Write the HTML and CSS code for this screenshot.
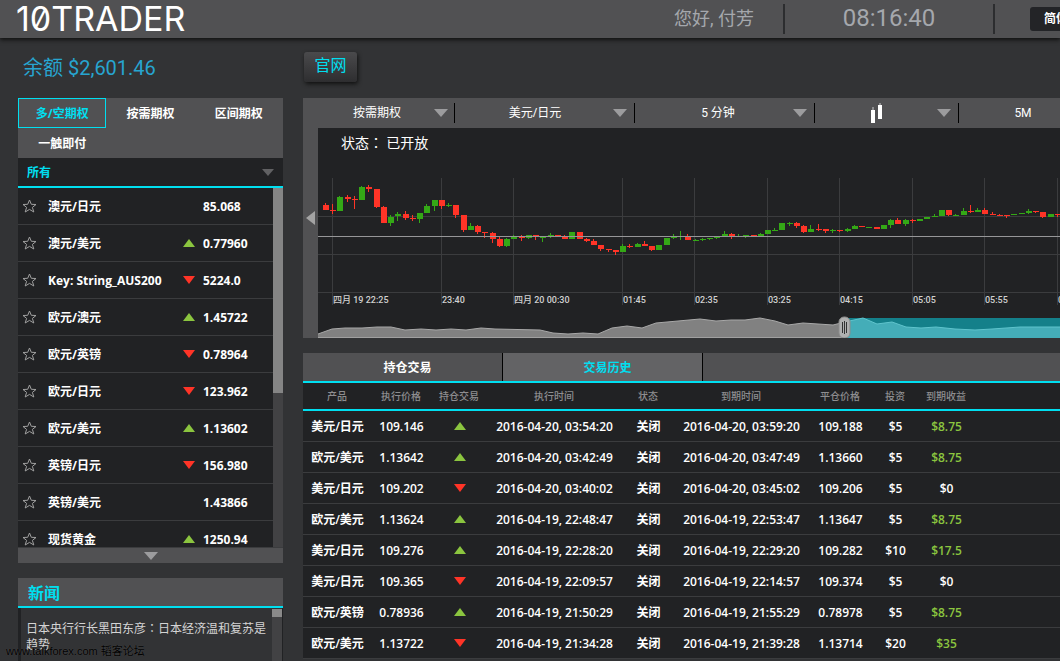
FILE: index.html
```html
<!DOCTYPE html>
<html lang="zh-CN">
<head>
<meta charset="utf-8">
<title>10TRADER</title>
<link rel="stylesheet" href="styles.css">
</head>
<body>
<svg class="defs" aria-hidden="true">
  <symbol id="star" viewBox="0 0 15 14"><path d="M7.5 1 L9.3 5.3 L14 5.5 L10.4 8.4 L11.8 13 L7.5 10.4 L3.2 13 L4.6 8.4 L1 5.5 L5.7 5.3 Z" fill="none" stroke="#a0a0a0" stroke-width="1"/></symbol>
  <symbol id="up" viewBox="0 0 12 8"><path d="M6 0 L12 8 H0 Z" fill="#8bc53f"/></symbol>
  <symbol id="down" viewBox="0 0 12 8"><path d="M0 0 H12 L6 8 Z" fill="#ff3427"/></symbol>
  <symbol id="caret" viewBox="0 0 14 8"><path d="M0 0 H14 L7 8 Z" fill="currentColor"/></symbol>
</svg>

<header class="topbar">
  <a class="logo" href="#">10TRADER</a>
  <div class="greeting">您好, 付芳</div>
  <div class="clock">08:16:40</div>
  <div class="language">
    <select class="language-select" aria-label="语言"><option>简体中文</option></select>
  </div>
</header>

<div class="layout">
  <aside class="side">
    <div class="balance">余额 $2,601.46</div>

    <section class="assets">
      <nav class="option-tabs">
        <button class="option-tab active">多/空期权</button>
        <button class="option-tab">按需期权</button>
        <button class="option-tab">区间期权</button>
        <button class="option-tab">一触即付</button>
      </nav>
      <label class="filter">
        <select class="filter-select" aria-label="资产"><option>所有</option></select>
        <svg class="filter-caret"><use href="#caret"/></svg>
      </label>
      <div class="asset-view">
        <ul class="asset-list">
          <li class="asset"><svg class="star"><use href="#star"/></svg><span class="asset-name">澳元/日元</span><span class="arrow"></span><span class="price">85.068</span></li>
          <li class="asset"><svg class="star"><use href="#star"/></svg><span class="asset-name">澳元/美元</span><svg class="arrow"><use href="#up"/></svg><span class="price">0.77960</span></li>
          <li class="asset"><svg class="star"><use href="#star"/></svg><span class="asset-name">Key: String_AUS200</span><svg class="arrow"><use href="#down"/></svg><span class="price">5224.0</span></li>
          <li class="asset"><svg class="star"><use href="#star"/></svg><span class="asset-name">欧元/澳元</span><svg class="arrow"><use href="#up"/></svg><span class="price">1.45722</span></li>
          <li class="asset"><svg class="star"><use href="#star"/></svg><span class="asset-name">欧元/英镑</span><svg class="arrow"><use href="#down"/></svg><span class="price">0.78964</span></li>
          <li class="asset"><svg class="star"><use href="#star"/></svg><span class="asset-name">欧元/日元</span><svg class="arrow"><use href="#down"/></svg><span class="price">123.962</span></li>
          <li class="asset"><svg class="star"><use href="#star"/></svg><span class="asset-name">欧元/美元</span><svg class="arrow"><use href="#up"/></svg><span class="price">1.13602</span></li>
          <li class="asset"><svg class="star"><use href="#star"/></svg><span class="asset-name">英镑/日元</span><svg class="arrow"><use href="#down"/></svg><span class="price">156.980</span></li>
          <li class="asset"><svg class="star"><use href="#star"/></svg><span class="asset-name">英镑/美元</span><span class="arrow"></span><span class="price">1.43866</span></li>
          <li class="asset"><svg class="star"><use href="#star"/></svg><span class="asset-name">现货黄金</span><svg class="arrow"><use href="#up"/></svg><span class="price">1250.94</span></li>
        </ul>
        <div class="track"><div class="thumb"></div></div>
      </div>
      <button class="more" aria-label="更多"><svg class="caret"><use href="#caret"/></svg></button>
    </section>

    <section class="news">
      <h2 class="news-title">新闻</h2>
      <div class="news-body">
        <a class="news-item" href="#">日本央行行长黑田东彦<span lang="zh-Hant">：</span>日本经济温和复苏是趋势</a>
        <div class="news-track"><div class="news-thumb"></div></div>
      </div>
    </section>
  </aside>

  <main class="main">
    <div class="actions"><button class="site-button">官网</button></div>

    <section class="chart">
      <div class="toolbar">
        <label class="tool tool-type"><select class="tool-select" aria-label="期权类型"><option>按需期权</option></select><svg class="caret"><use href="#caret"/></svg></label>
        <label class="tool"><select class="tool-select" aria-label="产品"><option>美元/日元</option></select><svg class="caret"><use href="#caret"/></svg></label>
        <label class="tool tool-period"><select class="tool-select" aria-label="周期"><option>5 分钟</option></select><svg class="caret"><use href="#caret"/></svg></label>
        <button class="tool tool-style" aria-label="图表样式">
          <span class="tool-icon"><svg width="14" height="22" viewBox="0 0 14 22"><path d="M3 5V8M10 1V4" stroke="#8c8c8e" stroke-width="2"/><rect x="1" y="8" width="4" height="13" fill="#fff"/><rect x="8" y="3" width="4" height="14" fill="#fff"/></svg></span>
          <svg class="caret"><use href="#caret"/></svg>
        </button>
        <button class="tool tool-zoom">5M</button>
      </div>
      <div class="chart-body">
        <button class="collapse" aria-label="收起"><svg width="9" height="14" viewBox="0 0 9 14"><path d="M9 0V14L0 7Z" fill="#a3a3a3"/></svg></button>
        <div class="plot">
          <div class="status">状态<span lang="zh-Hant">：</span> 已开放</div>
          <svg class="plot-svg" id="plot"></svg>
        </div>
      </div>
    </section>

    <section class="trades">
      <nav class="trade-tabs">
        <button class="trade-tab">持仓交易</button>
        <button class="trade-tab active">交易历史</button>
      </nav>
      <table class="table">
        <colgroup><col class="c-asset"><col class="c-price"><col class="c-dir"><col class="c-time"><col class="c-state"><col class="c-expiry"><col class="c-close"><col class="c-stake"><col class="c-payout"><col></colgroup>
        <thead><tr><th>产品</th><th>执行价格</th><th>持仓交易</th><th>执行时间</th><th>状态</th><th>到期时间</th><th>平仓价格</th><th>投资</th><th>到期收益</th><th></th></tr></thead>
        <tbody>
          <tr><td>美元/日元</td><td>109.146</td><td><svg class="arrow"><use href="#up"/></svg></td><td>2016-04-20, 03:54:20</td><td>关闭</td><td>2016-04-20, 03:59:20</td><td>109.188</td><td>$5</td><td class="win">$8.75</td><td></td></tr>
          <tr><td>欧元/美元</td><td>1.13642</td><td><svg class="arrow"><use href="#up"/></svg></td><td>2016-04-20, 03:42:49</td><td>关闭</td><td>2016-04-20, 03:47:49</td><td>1.13660</td><td>$5</td><td class="win">$8.75</td><td></td></tr>
          <tr><td>美元/日元</td><td>109.202</td><td><svg class="arrow"><use href="#down"/></svg></td><td>2016-04-20, 03:40:02</td><td>关闭</td><td>2016-04-20, 03:45:02</td><td>109.206</td><td>$5</td><td>$0</td><td></td></tr>
          <tr><td>欧元/美元</td><td>1.13624</td><td><svg class="arrow"><use href="#up"/></svg></td><td>2016-04-19, 22:48:47</td><td>关闭</td><td>2016-04-19, 22:53:47</td><td>1.13647</td><td>$5</td><td class="win">$8.75</td><td></td></tr>
          <tr><td>美元/日元</td><td>109.276</td><td><svg class="arrow"><use href="#up"/></svg></td><td>2016-04-19, 22:28:20</td><td>关闭</td><td>2016-04-19, 22:29:20</td><td>109.282</td><td>$10</td><td class="win">$17.5</td><td></td></tr>
          <tr><td>美元/日元</td><td>109.365</td><td><svg class="arrow"><use href="#down"/></svg></td><td>2016-04-19, 22:09:57</td><td>关闭</td><td>2016-04-19, 22:14:57</td><td>109.374</td><td>$5</td><td>$0</td><td></td></tr>
          <tr><td>欧元/英镑</td><td>0.78936</td><td><svg class="arrow"><use href="#up"/></svg></td><td>2016-04-19, 21:50:29</td><td>关闭</td><td>2016-04-19, 21:55:29</td><td>0.78978</td><td>$5</td><td class="win">$8.75</td><td></td></tr>
          <tr><td>欧元/美元</td><td>1.13722</td><td><svg class="arrow"><use href="#down"/></svg></td><td>2016-04-19, 21:34:28</td><td>关闭</td><td>2016-04-19, 21:39:28</td><td>1.13714</td><td>$20</td><td class="win">$35</td><td></td></tr>
        </tbody>
      </table>
    </section>
  </main>
</div>
<div class="watermark">www.talkforex.com 韬客论坛</div>
<script src="chart.js"></script>
</body>
</html>
```

FILE: styles.css
```css
* { box-sizing: border-box; }

body {
  margin: 0;
  height: 100vh;
  overflow: hidden;
  display: flex;
  flex-direction: column;
  background: #323335;
  color: #fff;
  font: 600 12px/18px "Open Sans", "Noto Sans CJK SC", sans-serif;
}

button, select {
  appearance: none;
  margin: 0;
  padding: 0;
  border: 0;
  border-radius: 0;
  background: none;
  color: inherit;
  font: inherit;
}

a { color: inherit; text-decoration: none; }

.defs { display: none; }
.arrow { display: block; width: 12px; height: 8px; }
.caret { flex: none; width: 14px; height: 8px; color: #9c9c9e; }

/* Top bar */
.topbar {
  position: relative;
  flex: none;
  display: flex;
  align-items: center;
  height: 38px;
  padding-left: 16px;
  background: #515153;
  box-shadow: 0 2px 4px #111;
  white-space: nowrap;
}
.logo {
  flex: 1;
  font: 400 34px/36px Inter, sans-serif;
  font-feature-settings: "zero";
}
.greeting, .clock {
  height: 30px;
  border-right: 2px solid #2c2d2f;
  color: #a5a8ad;
}
.greeting {
  width: 111px;
  font: 400 18px/30px Roboto, "Noto Sans CJK SC", sans-serif;
}
.clock {
  width: 210px;
  font: 400 24px/28px Roboto, sans-serif;
  text-align: center;
}
.language { width: 65px; padding-left: 35px; overflow: hidden; }
.language-select {
  display: block;
  width: 90px;
  height: 24px;
  padding-left: 14px;
  border-radius: 3px;
  background: #232427;
}

.layout { flex: 1; display: flex; gap: 20px; min-height: 0; padding-left: 18px; }

/* Left column */
.side { flex: none; display: flex; flex-direction: column; width: 265px; }
.balance {
  flex: none;
  height: 60px;
  padding-left: 5px;
  color: #27a5d0;
  font: 400 20px/60px Roboto, "Noto Sans CJK SC", sans-serif;
}
.assets { flex: none; font-weight: 700; }
.option-tabs { display: grid; grid-template-columns: repeat(3, 1fr); background: #515153; }
.option-tab { height: 30px; padding-top: 2px; border: 1px solid transparent; }
.option-tab.active { border-color: #00dff0; color: #00dff0; }
.filter {
  display: flex;
  align-items: center;
  height: 30px;
  padding: 0 9px;
  border-bottom: 2px solid #00dff0;
  background: #212224;
}
.filter-select { flex: 1; padding-top: 2px; color: #00dff0; }
.filter-caret { width: 12px; height: 7px; color: #616163; }
.asset-view { display: flex; height: 359px; overflow: hidden; }
.asset-list { flex: 1; margin: 0; padding: 0; list-style: none; background: #212224; }
.asset {
  display: grid;
  grid-template-columns: 15px 1fr 12px 78px;
  align-items: center;
  height: 37px;
  padding-left: 4px;
  border-bottom: 1px solid #3b3c3e;
}
.star { width: 15px; height: 14px; }
.asset-name { padding: 2px 0 0 11px; }
.price { padding: 2px 0 0 8px; }
.track { width: 10px; background: #424244; }
.thumb { height: 205px; background: #858585; }
.more {
  display: flex;
  justify-content: center;
  align-items: center;
  width: 100%;
  height: 16px;
  border-top: 1px solid #3b3c3e;
  background: #515153;
}

.news { flex: 1; display: flex; flex-direction: column; min-height: 0; margin-top: 15px; }
.news-title {
  flex: none;
  height: 30px;
  margin: 0;
  padding-left: 10px;
  border-bottom: 2px solid #00dff0;
  background: #515153;
  color: #00dff0;
  font: 700 16px/28px "Noto Sans CJK SC", sans-serif;
}
.news-body {
  flex: 1;
  display: flex;
  padding-top: 1px;
  border: solid #212224;
  border-width: 0 1px 0 3px;
}
.news-item {
  flex: 1;
  padding: 11px 5px;
  color: #d4d4d4;
  font: 400 12px/16px "Noto Sans CJK SC", sans-serif;
}
.news-track { width: 10px; background: #424244; }
.news-thumb { height: 8px; background: #8a8a8a; }

:lang(zh-Hant) { font-family: "Noto Sans CJK TC", sans-serif; }

/* Right column */
.main { flex: 1; min-width: 0; }
.actions { height: 60px; padding: 14px 1px 0; }
.site-button {
  display: block;
  width: 53px;
  height: 30px;
  padding-bottom: 6px;
  border-radius: 3px;
  background: linear-gradient(#4a4a4c, #2e2e30);
  box-shadow: 1px 2px 4px #111;
  color: #00dff0;
  font: 400 16px/24px "Noto Sans CJK SC", sans-serif;
}

.toolbar { display: flex; align-items: center; height: 30px; overflow: hidden; background: #515153; font-weight: 400; }
.tool {
  flex: none;
  display: flex;
  align-items: center;
  width: 180px;
  height: 20px;
  padding-right: 7px;
  border-right: 1px solid #000;
}
.tool-select, .tool-icon { flex: 1; min-width: 0; padding-left: 2px; text-align: center; text-align-last: center; }
.tool-icon { display: flex; justify-content: center; }
.tool-type { width: 152px; padding-left: 15px; padding-right: 6px; }
.tool-period { padding-left: 6px; font-family: Roboto, "Noto Sans CJK SC", sans-serif; }
.tool-style { width: 144px; }
.tool-zoom { justify-content: center; width: 128px; padding: 0; border: 0; font-family: Roboto, sans-serif; }

.chart-body { display: flex; }
.collapse { display: flex; justify-content: center; align-items: center; width: 15px; padding-bottom: 30px; background: #515153; }
.plot { flex: 1; min-width: 0; display: grid; background: #212224; }
.plot > * { grid-area: 1 / 1; }
.status { padding: 5px 23px; font: 400 14px/18px "Noto Sans CJK SC", sans-serif; }
.plot-svg { width: 100%; height: 210px; }
.grid-line { fill: #3b3c3e; }
.now-line { fill: #969698; }
.rise { fill: #34a816; }
.fall { fill: #ff3427; }
.time-label { fill: #d0d0d0; font: 500 9px Roboto, "Noto Sans CJK SC", sans-serif; }

/* Trades */
.trades { margin-top: 15px; }
.trade-tabs { display: flex; height: 30px; border-bottom: 2px solid #00dff0; background: #515153; }
.trade-tab { width: 200px; border-right: 1px solid #000; padding: 2px 0 0 10px; font-weight: 700; }
.trade-tab.active { background: #636365; color: #00dff0; }
.table { width: 100%; table-layout: fixed; border-collapse: separate; border-spacing: 0; background: #212224; white-space: nowrap; }
.table th, .table td { padding: 0; text-align: center; }
.table th { height: 28px; border-bottom: 2px solid #00dff0; color: #8e8e90; font-size: 10px; font-weight: 500; }
.table td { height: 31px; padding: 2px 0 0 1px; border-bottom: 1px solid #3b3c3e; }
.table .arrow { margin: -2px auto 0; }
.table .win { color: #8bc53f; }
.c-asset { width: 68px; }
.c-price { width: 60px; }
.c-dir { width: 56px; }
.c-time { width: 134px; }
.c-state { width: 54px; }
.c-expiry { width: 132px; }
.c-close { width: 66px; }
.c-stake { width: 44px; }
.c-payout { width: 58px; }

.watermark {
  position: absolute;
  left: 6px;
  bottom: 2px;
  color: #000;
  font: 400 11px/16px "Liberation Sans", "Noto Sans CJK SC", sans-serif;
  text-shadow: 0 0 1px #555;
}
```

FILE: chart.js
```js
const svg = document.getElementById("plot");
const NS = "http://www.w3.org/2000/svg";

function add(name, attrs, text) {
  const node = document.createElementNS(NS, name);
  for (const key in attrs) node.setAttribute(key, attrs[key]);
  if (text) node.textContent = text;
  svg.appendChild(node);
}
function rect(cls, x, y, width, height) {
  add("rect", { class: cls, x, y, width, height, "shape-rendering": "crispEdges" });
}

// Direction, high, body top, body bottom, low; three units to a pixel.
const candles = `r 99 105 120 120,r 102 120 123 132,g 78 81 123 123,r 75 81 87 96,r 78 87 90 117,g 48 51 90 90,
r 45 51 57 66,r 57 57 111 114,r 108 111 159 159,g 135 141 159 168,g 126 132 138 153,r 123 132 144 150,
r 135 144 147 153,g 129 129 147 159,g 102 108 129 129,g 90 90 108 123,r 90 90 108 117,g 99 105 108 111,
r 105 105 135 144,r 135 135 180 186,g 159 168 180 180,r 165 168 186 192,r 186 186 189 204,r 186 189 207 219,
r 201 207 228 231,g 204 207 228 231,g 195 201 207 207,r 195 201 204 213,g 195 195 204 207,r 195 195 198 210,
g 198 201 204 216,g 189 195 201 204,r 195 195 198 198,r 195 198 207 207,g 186 186 207 207,r 186 186 207 207,
r 204 207 213 216,r 207 213 225 225,r 225 225 237 243,r 237 237 240 246,r 240 240 246 255,g 222 228 246 246,
r 222 228 231 234,g 219 222 231 231,r 213 222 228 228,r 228 228 240 243,g 225 225 240 240,g 204 204 225 225,
g 192 201 204 207,g 183 198 201 210,r 192 198 210 210,g 207 210 213 213,g 204 207 210 213,g 204 204 207 210,
g 198 201 204 207,g 183 192 198 198,r 189 192 198 207,g 192 198 201 201,g 195 195 198 204,r 195 195 198 198,
g 189 192 198 198,g 180 180 192 192,g 174 180 183 183,g 159 159 180 180,g 156 159 162 168,r 156 159 168 174,
r 165 168 186 189,g 165 177 186 186,r 162 177 180 183,r 177 177 183 189,g 177 180 183 189,r 180 180 183 186,
g 174 177 183 186,g 165 168 177 177,r 168 168 171 171,g 171 171 174 174,r 171 171 177 177,g 165 165 177 177,
g 147 150 165 174,r 144 150 162 162,g 147 150 162 168,r 147 150 153 159,g 147 147 153 153,g 141 141 147 147,
g 132 138 141 141,g 120 120 138 138,r 120 120 135 138,g 132 135 138 138,g 114 123 135 135,r 105 123 126 129,
g 114 120 126 126,r 114 120 132 132,r 126 132 135 135,r 132 135 138 138,r 135 135 138 144,g 132 132 135 135,
g 129 129 132 132,g 117 123 129 132,r 123 123 126 129,r 126 126 141 144,g 132 132 141 141,r 132 132 135 141`;

const times = [[14, "四月 19 22:25"], [123, "23:40"], [195, "四月 20 00:30"], [304, "01:45"], [376, "02:35"],
  [449, "03:25"], [521, "04:15"], [594, "05:05"], [666, "05:55"], [739, "06:45"]];

for (const [x] of times) rect("grid-line", x, 50, 1, 127);
for (const y of [88, 126]) rect("grid-line", 0, y, "100%", 1);
rect("grid-line", 0, 164, "100%", 1);

candles.split(",").forEach((entry, i) => {
  const [dir, ...levels] = entry.trim().split(" ");
  const [high, top, bottom, low] = levels.map(v => 42 + v / 3);
  const x = Math.round(7 + 7.246 * i);
  const cls = dir === "g" ? "rise" : "fall";
  rect(cls, x, high, 1, low - high);
  rect(cls, x - 2, top, 6, bottom - top);
});
rect("now-line", 0, 108, "100%", 1);

for (const [x, label] of times) add("text", { class: "time-label", x: x + 1, y: 175 }, label);

// Range navigator: overview area, selected window and its handle.
const past = "0,206 14,201 27,200 44,200 59,199 73,199 87,202 103,201 118,202 133,201 148,202 163,200 177,201 222,202 235,205 250,206 265,205 280,206 294,200 309,198 324,200 338,195 382,191 398,193 413,192 427,192 442,190 457,193 470,197 485,195 500,196 515,197 527,194";
const recent = "527,194 545,190 559,196 574,194 588,199 603,200 618,199 637,201 657,202 674,201 702,199 742,199 2000,199";
rect("window", 527, 190, "100%", 20);
svg.lastChild.setAttribute("fill", "#14808a");
add("polygon", { points: past + " 527,210 0,210", fill: "#818181" });
add("polyline", { points: past, fill: "none", stroke: "#a8a8a8" });
add("polygon", { points: recent + " 2000,210 527,210", fill: "#44adb8" });
add("polyline", { points: recent, fill: "none", stroke: "#5fc4cd" });
rect("base", 0, 209, 527, 1);
svg.lastChild.setAttribute("fill", "#a0a0a0");
add("rect", { x: 521, y: 189, width: 11, height: 21, rx: 5, fill: "#b0b0b0", stroke: "#8b8b8b" });
add("path", { d: "M524.5 194V205M526.5 193V206M528.5 194V205", stroke: "#333", fill: "none" });
```
